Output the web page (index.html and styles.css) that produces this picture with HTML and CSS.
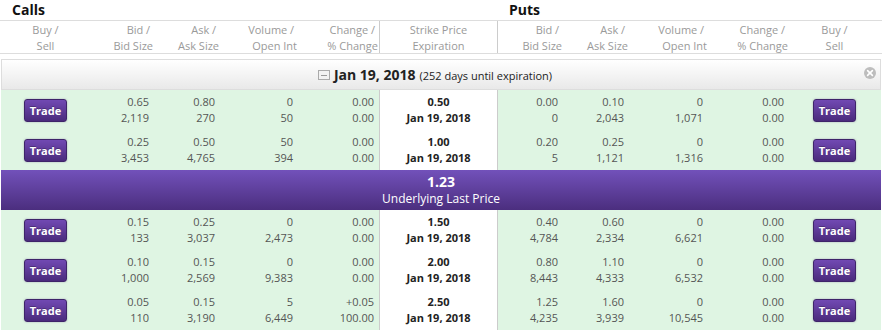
FILE: index.html
```html
<!DOCTYPE html>
<html>
<head>
<meta charset="utf-8">
<link rel="stylesheet" href="styles.css">
</head>
<body>
<div class="chain">
  <div class="titles">
    <div class="t-calls">Calls</div>
    <div class="t-puts">Puts</div>
  </div>

  <div class="hdr cols">
    <div class="h center">Buy /<br>Sell</div>
    <div class="h">Bid /&nbsp;<br>Bid Size</div>
    <div class="h">Ask /&nbsp;<br>Ask Size</div>
    <div class="h">Volume /&nbsp;<br>Open Int</div>
    <div class="h">Change /&nbsp;<br>% Change</div>
    <div class="h center strike-h">Strike Price<br>Expiration</div>
    <div class="h">Bid /&nbsp;<br>Bid Size</div>
    <div class="h">Ask /&nbsp;<br>Ask Size</div>
    <div class="h">Volume /&nbsp;<br>Open Int</div>
    <div class="h">Change /&nbsp;<br>% Change</div>
    <div class="h center">Buy /<br>Sell</div>
  </div>

  <div class="exp">
    <span class="minus"><span></span></span>
    <span class="exp-date">Jan 19, 2018</span>
    <span class="exp-days">(252 days until expiration)</span>
    <svg class="close" width="12" height="12" viewBox="0 0 12 12"><circle cx="6" cy="6" r="6" fill="#bdbdbd"/><path d="M3.6 3.6 L8.4 8.4 M8.4 3.6 L3.6 8.4" stroke="#fff" stroke-width="1.6" stroke-linecap="round"/></svg>
  </div>

  <div class="row cols">
    <div class="c btn-cell"><span class="trade">Trade</span></div>
    <div class="c">0.65<br>2,119</div>
    <div class="c">0.80<br>270</div>
    <div class="c">0<br>50</div>
    <div class="c">0.00<br>0.00</div>
    <div class="c strike">0.50<br>Jan 19, 2018</div>
    <div class="c">0.00<br>0</div>
    <div class="c">0.10<br>2,043</div>
    <div class="c">0<br>1,071</div>
    <div class="c">0.00<br>0.00</div>
    <div class="c btn-cell"><span class="trade">Trade</span></div>
  </div>

  <div class="row cols">
    <div class="c btn-cell"><span class="trade">Trade</span></div>
    <div class="c">0.25<br>3,453</div>
    <div class="c">0.50<br>4,765</div>
    <div class="c">50<br>394</div>
    <div class="c">0.00<br>0.00</div>
    <div class="c strike">1.00<br>Jan 19, 2018</div>
    <div class="c">0.20<br>5</div>
    <div class="c">0.25<br>1,121</div>
    <div class="c">0<br>1,316</div>
    <div class="c">0.00<br>0.00</div>
    <div class="c btn-cell"><span class="trade">Trade</span></div>
  </div>

  <div class="underlying">
    <div class="u-price">1.23</div>
    <div class="u-label">Underlying Last Price</div>
  </div>

  <div class="row cols">
    <div class="c btn-cell"><span class="trade">Trade</span></div>
    <div class="c">0.15<br>133</div>
    <div class="c">0.25<br>3,037</div>
    <div class="c">0<br>2,473</div>
    <div class="c">0.00<br>0.00</div>
    <div class="c strike">1.50<br>Jan 19, 2018</div>
    <div class="c">0.40<br>4,784</div>
    <div class="c">0.60<br>2,334</div>
    <div class="c">0<br>6,621</div>
    <div class="c">0.00<br>0.00</div>
    <div class="c btn-cell"><span class="trade">Trade</span></div>
  </div>

  <div class="row cols">
    <div class="c btn-cell"><span class="trade">Trade</span></div>
    <div class="c">0.10<br>1,000</div>
    <div class="c">0.15<br>2,569</div>
    <div class="c">0<br>9,383</div>
    <div class="c">0.00<br>0.00</div>
    <div class="c strike">2.00<br>Jan 19, 2018</div>
    <div class="c">0.80<br>8,443</div>
    <div class="c">1.10<br>4,333</div>
    <div class="c">0<br>6,532</div>
    <div class="c">0.00<br>0.00</div>
    <div class="c btn-cell"><span class="trade">Trade</span></div>
  </div>

  <div class="row cols">
    <div class="c btn-cell"><span class="trade">Trade</span></div>
    <div class="c">0.05<br>110</div>
    <div class="c">0.15<br>3,190</div>
    <div class="c">5<br>6,449</div>
    <div class="c">+0.05<br>100.00</div>
    <div class="c strike">2.50<br>Jan 19, 2018</div>
    <div class="c">1.25<br>4,235</div>
    <div class="c">1.60<br>3,939</div>
    <div class="c">0<br>10,545</div>
    <div class="c">0.00<br>0.00</div>
    <div class="c btn-cell"><span class="trade">Trade</span></div>
  </div>
</div>
</body>
</html>
```

FILE: styles.css
```css
html, body {
  margin: 0;
  padding: 0;
  background: #fff;
  overflow: hidden;
}

body {
  font-family: "Open Sans", "DejaVu Sans", sans-serif;
  font-size: 11px;
  line-height: 1.42857;
  color: #555;
}

.chain {
  width: 880px;
  margin-left: 1px;
}

.cols {
  display: grid;
  grid-template-columns: 89px 64px 66px 78px 81px 119px 65px 66px 79px 81px 91px;
}

/* titles */
.titles {
  display: grid;
  grid-template-columns: 497px 1fr;
  height: 20px;
}

.t-calls,
.t-puts {
  font-size: 14px;
  font-weight: bold;
  color: #111;
  line-height: 19px;
  padding-left: 11px;
}

/* header */
.hdr {
  border-top: 1px solid #ddd;
  border-bottom: 1px solid #ddd;
  height: 32px;
  box-sizing: content-box;
  margin-left: -1px;
  padding-left: 1px;
  width: 881px;
}

.h {
  color: #9a9a9a;
  text-align: right;
  padding-right: 1px;
  padding-top: 1px;
  white-space: nowrap;
}

.h.center {
  text-align: center;
  padding-right: 0;
}

.strike-h {
  border-left: 1px solid #ccc;
  border-right: 1px solid #ccc;
}

/* expiration band */
.exp {
  position: relative;
  margin-top: 5px;
  height: 29px;
  border: 1px solid #ddd;
  background: linear-gradient(#ffffff, #e9e9e9);
  display: flex;
  align-items: center;
  justify-content: center;
  padding-right: 12px;
  color: #222;
}

.minus {
  width: 10px;
  height: 8px;
  border: 1px solid #aaa;
  background: #f2f2f2;
  display: flex;
  align-items: center;
  justify-content: center;
  margin-right: 4px;
  margin-top: 1px;
}

.minus span {
  width: 6px;
  height: 1px;
  background: #999;
}

.exp-date {
  font-size: 14px;
  font-weight: bold;
  line-height: 19px;
}

.exp-days {
  font-size: 11px;
  line-height: 19px;
  margin-left: 4px;
  padding-top: 2px;
}

.close {
  position: absolute;
  right: 4px;
  top: 7px;
}

/* data rows */
.row {
  height: 40px;
  background: #dff5e3;
}

.c {
  display: flex;
  flex-direction: column;
  justify-content: center;
  align-items: flex-end;
  text-align: right;
  padding-right: 5px;
  white-space: nowrap;
}

.c.strike {
  background: #fff;
  border-left: 1px solid #ccc;
  border-right: 1px solid #ccc;
  align-items: center;
  text-align: center;
  padding-right: 0;
  font-weight: bold;
  color: #222;
}

.c.btn-cell {
  align-items: center;
  padding-right: 0;
}

.trade {
  display: inline-block;
  height: 21px;
  line-height: 21px;
  padding: 0 5px;
  border: 1px solid #3e2469;
  border-radius: 3px;
  background: linear-gradient(#7149b3, #4a2b7c);
  color: #fff;
  font-weight: bold;
  font-size: 11px;
  box-shadow: 0 0 2px rgba(60, 30, 100, 0.35);
  text-shadow: 0 -1px 0 rgba(0, 0, 0, 0.25);
}

/* underlying band */
.underlying {
  height: 40px;
  background: linear-gradient(#7251ba, #4b2e7e);
  color: #fff;
  display: flex;
  flex-direction: column;
  justify-content: center;
  align-items: center;
}

.u-price {
  font-size: 14px;
  font-weight: bold;
  line-height: 17px;
}

.u-label {
  font-size: 12px;
  line-height: 17px;
}
```
